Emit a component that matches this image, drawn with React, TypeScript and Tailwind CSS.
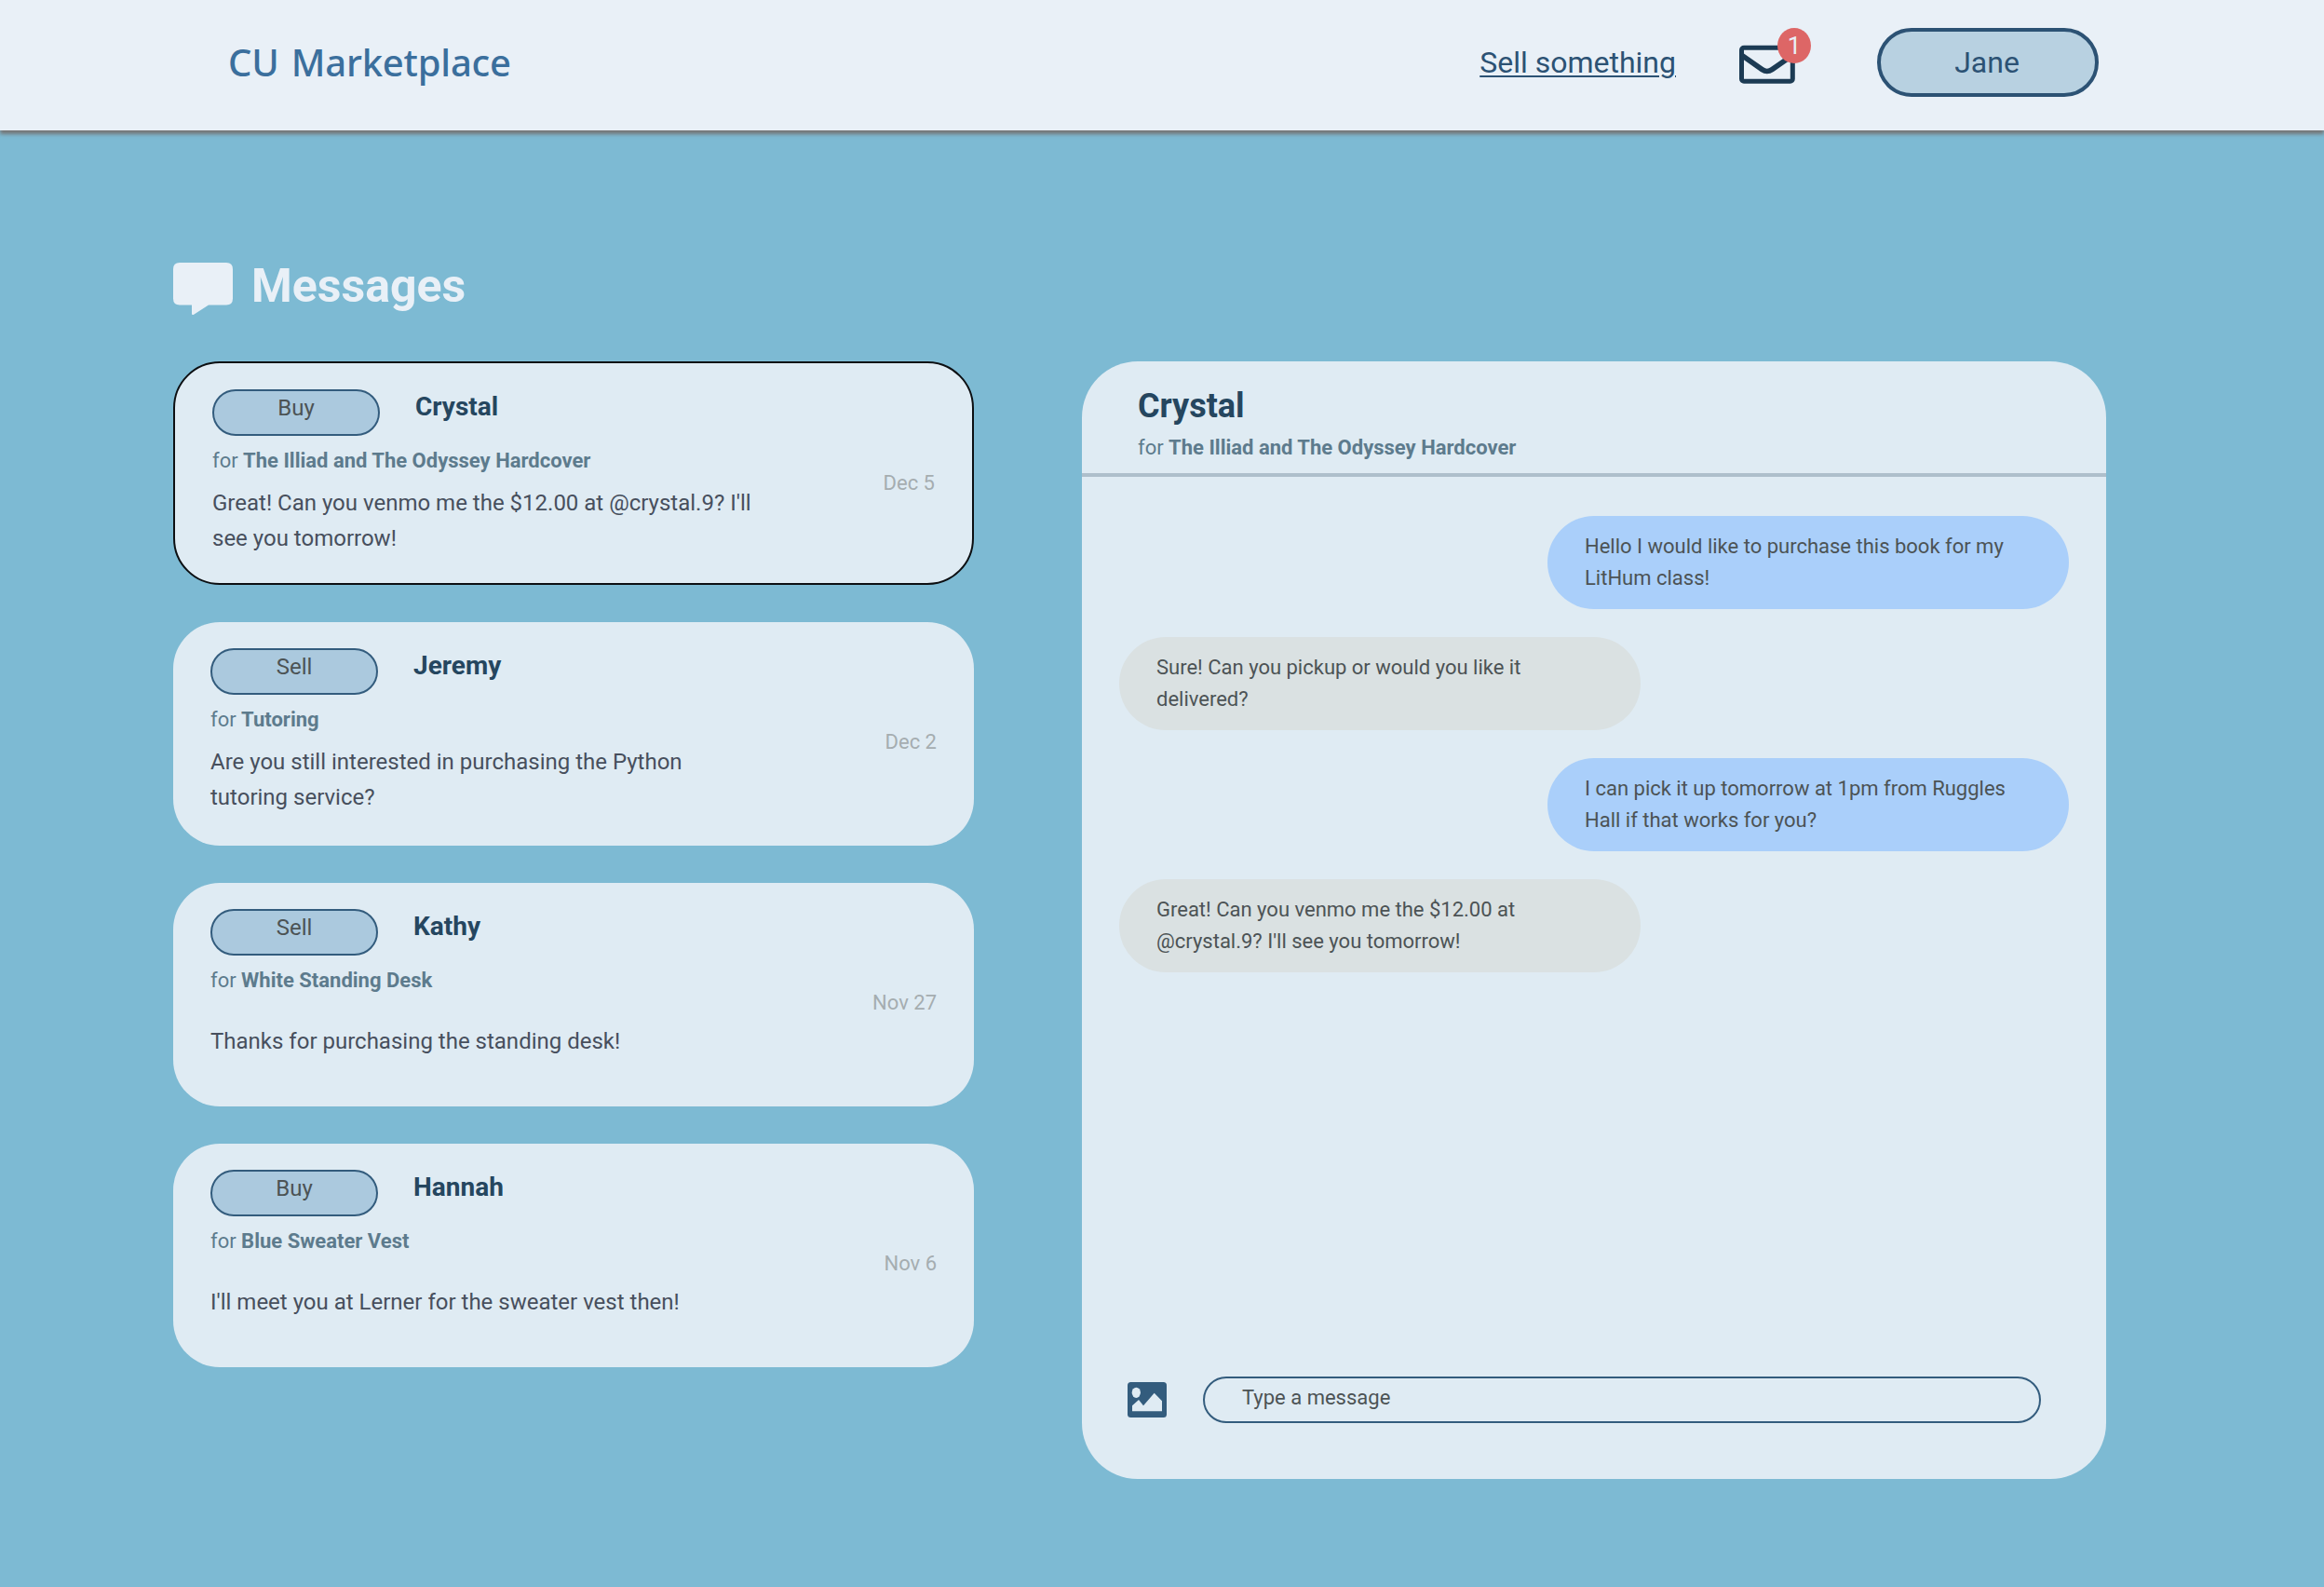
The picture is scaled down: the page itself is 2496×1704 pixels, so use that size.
type Conversation = {
  kind: "Buy" | "Sell";
  name: string;
  item: string;
  message: string;
  date: string;
  selected?: boolean;
  singleLine?: boolean;
};

const conversations: Conversation[] = [
  {
    kind: "Buy",
    name: "Crystal",
    item: "The Illiad and The Odyssey Hardcover",
    message: "Great! Can you venmo me the $12.00 at @crystal.9? I'll see you tomorrow!",
    date: "Dec 5",
    selected: true,
  },
  {
    kind: "Sell",
    name: "Jeremy",
    item: "Tutoring",
    message: "Are you still interested in purchasing the Python tutoring service?",
    date: "Dec 2",
  },
  {
    kind: "Sell",
    name: "Kathy",
    item: "White Standing Desk",
    message: "Thanks for purchasing the standing desk!",
    date: "Nov 27",
    singleLine: true,
  },
  {
    kind: "Buy",
    name: "Hannah",
    item: "Blue Sweater Vest",
    message: "I'll meet you at Lerner for the sweater vest then!",
    date: "Nov 6",
    singleLine: true,
  },
];

const thread = [
  { mine: true, text: "Hello I would like to purchase this book for my LitHum class!" },
  { mine: false, text: "Sure! Can you pickup or would you like it delivered?" },
  { mine: true, text: "I can pick it up tomorrow at 1pm from Ruggles Hall if that works for you?" },
  { mine: false, text: "Great! Can you venmo me the $12.00 at @crystal.9? I'll see you tomorrow!" },
];

function EnvelopeIcon() {
  return (
    <svg width="60" height="42" viewBox="0 0 60 42" fill="none" stroke="#1c3b54" strokeWidth="5">
      <rect x="2.5" y="3.3" width="54.8" height="36" rx="2.5" />
      <path d="M3 11.5 24.5 26.6Q29.8 30.4 35.2 26.6L57 11.5" strokeWidth="5.6" />
    </svg>
  );
}

function SpeechBubbleIcon() {
  return (
    <svg width="64" height="56" viewBox="0 0 64 56" fill="#e9f0f7">
      <path d="M7 0H57Q64 0 64 7V38.5Q64 45.5 57 45.5H38L22.5 55.6Q20 57 20 54.5V45.5H7Q0 45.5 0 38.5V7Q0 0 7 0Z" />
    </svg>
  );
}

function ImageIcon() {
  return (
    <svg width="42" height="38" viewBox="0 0 42 38">
      <rect width="42" height="38" rx="3.5" fill="#335c7d" />
      <ellipse cx="9.3" cy="11.3" rx="4.6" ry="5.6" fill="#dfebf3" />
      <path d="M5 25.3 12 19 17 25.3 28.7 11.7 37 20.3V31.3H5Z" fill="#dfebf3" />
    </svg>
  );
}

function Header() {
  return (
    <header className="relative flex h-[140px] items-center justify-between bg-[#e9f0f7] pr-[242px] pb-[6px] pl-[245px] shadow-[0_4px_4px_#757575]">
      <div className="font-['Noto_Sans',sans-serif] text-[40px] font-medium tracking-[-0.2px] [word-spacing:3px] text-[#3b6f9d]">
        CU Marketplace
      </div>
      <nav className="flex items-center text-[32px] text-[#2c5274]">
        <a className="underline decoration-2 underline-offset-[3px]">Sell something</a>
        <div className="relative mt-1 ml-[68px]">
          <EnvelopeIcon />
          <span className="absolute -top-[18px] left-[41px] flex h-[38px] w-9 items-center justify-center rounded-[50%] bg-[#dd6666] text-[26px] leading-none text-[#e9f0f7]">
            1
          </span>
        </div>
        <button className="ml-[88px] h-[74px] w-[238px] rounded-full border-4 border-[#2c5274] bg-[#b8d1e1] pr-0.5">Jane</button>
      </nav>
    </header>
  );
}

function ConversationCard({ kind, name, item, message, date, selected, singleLine }: Conversation) {
  return (
    <article
      className={`flex h-60 justify-between rounded-[50px] bg-[#dfebf3] px-10 pt-7 ${selected ? "border-2 border-[#0c0f12]" : ""}`}
    >
      <div className="w-[590px]">
        <div className="flex">
          <span className="h-[50px] w-[180px] rounded-full border-2 border-[#335c7d] bg-[#abc9de] text-center text-2xl leading-9 text-[#4c5355]">
            {kind}
          </span>
          <h2 className="ml-[38px] text-[28px] leading-[37px] font-bold text-[#25465f]">{name}</h2>
        </div>
        <p className="mt-2.5 text-[22px] leading-[33px] text-[#5d7b8d]">
          for <b>{item}</b>
        </p>
        <div className="mt-2.5 flex h-[76px] items-center text-2xl leading-[38px] text-[#474f5d]">
          <p className={singleLine ? "pt-0.5" : ""}>{message}</p>
        </div>
      </div>
      <time className="mt-[84px] text-[22px] leading-[33px] text-[#a5adb0]">{date}</time>
    </article>
  );
}

function ChatPanel() {
  return (
    <section className="flex h-[1200px] w-[1100px] flex-col rounded-[60px] bg-[#dfebf3]">
      <div className="h-[124px] border-b-4 border-[#aebfcb] px-[60px] pt-[27px]">
        <h2 className="text-4xl leading-[43px] font-bold text-[#25465f]">Crystal</h2>
        <p className="mt-1.5 text-[22px] leading-[33px] text-[#5d7b8d]">
          for <b>The Illiad and The Odyssey Hardcover</b>
        </p>
      </div>
      <div className="flex flex-1 flex-col gap-[30px] px-10 pt-[42px]">
        {thread.map(({ mine, text }) => (
          <p
            key={text}
            className={`h-[100px] w-[560px] rounded-full px-10 pt-4 text-[22px] leading-[34px] text-[#4c5355] ${
              mine ? "self-end bg-[#aacffa]" : "self-start bg-[#dae1e2]"
            }`}
          >
            {text}
          </p>
        ))}
      </div>
      <div className="mb-[60px] ml-[49px] flex items-center">
        <ImageIcon />
        <div className="ml-[39px] h-[50px] w-[900px] rounded-full border-2 border-[#335c7d] pl-10 text-[22px] leading-[41px] text-[#4c5355]">
          Type a message
        </div>
      </div>
    </section>
  );
}

export default function App() {
  return (
    <div className="h-[1704px] w-[2496px] overflow-hidden bg-[#7dbad3] font-['Roboto',sans-serif]">
      <Header />
      <main className="pt-[142px] pl-[186px]">
        <div className="flex h-14 gap-5">
          <SpeechBubbleIcon />
          <h1 className="text-[50px] leading-[50px] font-bold text-[#e9f0f7]">Messages</h1>
        </div>
        <div className="mt-[50px] flex gap-[116px]">
          <div className="flex w-[860px] flex-col gap-10">
            {conversations.map((c) => (
              <ConversationCard key={c.name} {...c} />
            ))}
          </div>
          <ChatPanel />
        </div>
      </main>
    </div>
  );
}
